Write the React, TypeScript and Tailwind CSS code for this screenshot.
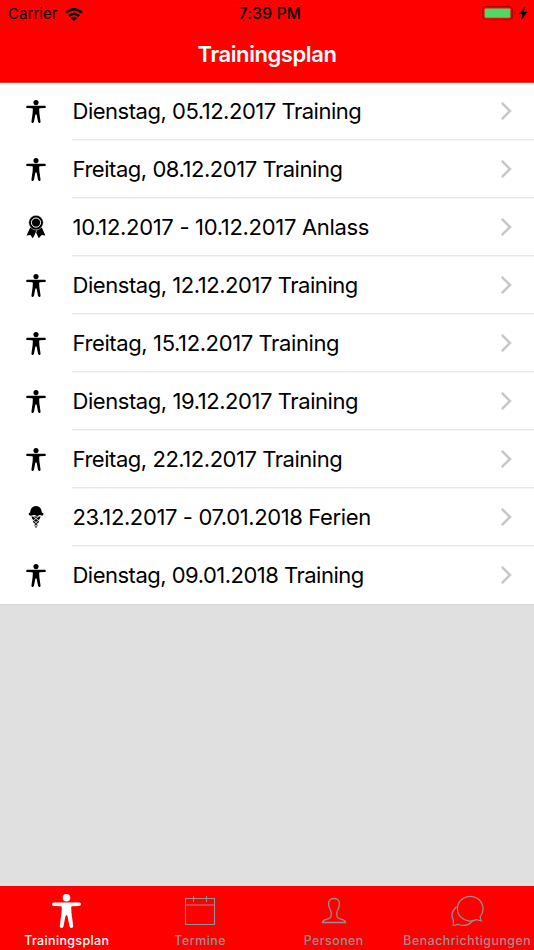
import type { ReactNode } from "react";

type EntryKind = "training" | "event" | "holiday";

interface Entry {
  kind: EntryKind;
  label: string;
  tracking: string;
}

const entries: Entry[] = [
  { kind: "training", label: "Dienstag, 05.12.2017 Training", tracking: "tracking-[-0.48px]" },
  { kind: "training", label: "Freitag, 08.12.2017 Training", tracking: "tracking-[-0.46px]" },
  { kind: "event", label: "10.12.2017 - 10.12.2017 Anlass", tracking: "tracking-[-0.31px]" },
  { kind: "training", label: "Dienstag, 12.12.2017 Training", tracking: "tracking-[-0.45px]" },
  { kind: "training", label: "Freitag, 15.12.2017 Training", tracking: "tracking-[-0.39px]" },
  { kind: "training", label: "Dienstag, 19.12.2017 Training", tracking: "tracking-[-0.43px]" },
  { kind: "training", label: "Freitag, 22.12.2017 Training", tracking: "tracking-[-0.46px]" },
  { kind: "holiday", label: "23.12.2017 - 07.01.2018 Ferien", tracking: "tracking-[-0.38px]" },
  { kind: "training", label: "Dienstag, 09.01.2018 Training", tracking: "tracking-[-0.51px]" },
];

const BodyIcon = ({ className }: { className: string }) => (
  <svg viewBox="0 0 29 34" className={className} fill="currentColor">
    <circle cx="14.5" cy="3.8" r="3.8" />
    <path d="M1.8 8.4H27.2A1.8 1.8 0 0 1 27.2 12L20.4 12.2C19.6 12.2 19.2 12.8 19.2 13.6C19.2 20 20.6 26 21.2 31.8C21.4 34.4 18 34.6 17.5 32.3L15.6 22.5C15.3 20.7 13.7 20.7 13.4 22.5L11.5 32.3C11 34.6 7.6 34.4 7.8 31.8C8.4 26 9.8 20 9.8 13.6C9.8 12.8 9.4 12.2 8.6 12.2L1.8 12A1.8 1.8 0 0 1 1.8 8.4Z" />
  </svg>
);

const RibbonIcon = () => (
  <svg viewBox="0 0 20 24" className="h-6 w-5">
    <path d="M4.2 12.5L0.6 20.4L4.4 20L6.8 23.2L10 17.5L12.8 23.2L15.6 20L19.4 20.4L15.8 12.5Z" fill="#000" />
    <path d="M11 14.5L9.2 19.5" stroke="#fff" strokeWidth="0.6" />
    <circle cx="10" cy="7.6" r="7.3" fill="#000" stroke="#fff" strokeWidth="0.5" />
    <circle cx="10" cy="7.6" r="4.6" fill="none" stroke="#fff" strokeWidth="1" />
  </svg>
);

const IceCreamIcon = () => (
  <svg viewBox="0 0 16 24" className="h-6 w-4">
    <path d="M2.2 7.6C2.2 3.8 4.7 1 8 1S13.8 3.8 13.8 7.6C15.9 7.8 15.9 10.6 14 10.6C12.9 10.6 12.5 9.9 11.8 9.9C10.8 9.9 10.5 10.9 9.2 10.9C8 10.9 7.5 10 6.6 10C5.5 10 4.6 10.7 3 10.7C0.1 10.9 0.1 7.8 2.2 7.6Z" fill="#000" />
    {/* waffle cone with its lattice knocked out */}
    <path d="M3.4 11.6H12.6L8.7 22.4H7.3Z" fill="#000" />
    <path d="M4.6 11L11.4 16M3.6 14L10.4 19.2M5 18.2L9.4 21.8M11.4 11L4.6 16M12.4 14L5.6 19.2M11 18.2L6.6 21.8" fill="none" stroke="#fff" strokeWidth="0.75" />
  </svg>
);

const entryIcons: Record<EntryKind, ReactNode> = {
  training: <BodyIcon className="h-[23px] w-5" />,
  event: <RibbonIcon />,
  holiday: <IceCreamIcon />,
};

const CalendarIcon = () => (
  <svg viewBox="0 0 32 32" className="h-8 w-8" fill="none" stroke="currentColor" strokeWidth="1.1">
    <path d="M1.5 3.5H30.5V29.5H1.5ZM1.5 10H30.5M9.5 1V7M22.5 1V7" />
  </svg>
);

const PersonIcon = () => (
  <svg viewBox="0 0 32 32" className="h-8 w-8" fill="none" stroke="currentColor" strokeWidth="1.3">
    <path d="M16 3.5C12 3.5 10.4 6 10.6 9.4C10.8 13.5 12.8 15 13.2 17.4C13.7 23 12 23.6 8.5 24.4C5.8 25 4.5 25.6 4.5 27.5H27.5C27.5 25.6 26.2 25 23.5 24.4C20 23.6 18.3 23 18.8 17.4C19.2 15 21.2 13.5 21.4 9.4C21.6 6 20 3.5 16 3.5Z" />
  </svg>
);

const ChatIcon = () => (
  <svg viewBox="0 0 34 34" className="mr-px h-[34px] w-[34px]" fill="none" stroke="currentColor" strokeWidth="1.2">
    <path d="M31.5 27C30.5 25.5 30 24.5 30.3 22.3A12.8 12.3 0 1 0 26.2 25.6C28 25.6 29.5 26.7 31.5 27Z" />
    <path d="M6.6 12.7C1.7 17 1.2 22 3.3 26C3.8 27.8 3 29.5 3.3 31.5C5 31.5 6.5 30.1 8.6 30.5C13.5 32.3 19 31 22.4 27" />
  </svg>
);

const tabs = [
  { label: "Trainingsplan", icon: <BodyIcon className="h-[34px] w-[29px]" />, style: "text-white tracking-[0.35px]" },
  { label: "Termine", icon: <CalendarIcon />, style: "text-[#929292] tracking-[0.45px]" },
  { label: "Personen", icon: <PersonIcon />, style: "text-[#929292] tracking-[0.4px]" },
  { label: "Benachrichtigungen", icon: <ChatIcon />, style: "text-[#929292] tracking-[0.4px]" },
];

const StatusBar = () => (
  <div className="flex h-7 items-center justify-between pl-2 pr-1.5 text-[15.5px] text-black">
    <div className="flex flex-1 items-center gap-[7px]">
      <span className="pt-px text-[15px] tracking-[0.05px]">Carrier</span>
      <svg viewBox="0 0 18 13" className="h-[13px] w-[18px]" fill="none" stroke="currentColor" strokeWidth="2.5">
        <path d="M1 4.6Q9-2.2 17 4.6M3.9 8Q9 3.4 14.1 8" />
        <path d="M5.8 10Q9 7.6 12.2 10L9 13Z" fill="currentColor" stroke="none" />
      </svg>
    </div>
    <span className="pl-1 text-[15.5px] font-medium tracking-[0.25px]">7:39 PM</span>
    <div className="flex flex-1 items-center justify-end">
      <svg viewBox="0 0 46 16" className="h-4 w-[46px]">
        <rect x="0.8" y="0.6" width="29.4" height="13" rx="2.8" fill="none" stroke="#a60000" strokeWidth="1.2" />
        <rect x="2.6" y="2.4" width="25.8" height="9.4" rx="1" fill="#4cd964" />
        <path d="M32 5Q33.8 7.1 32 9.2Z" fill="#a60000" />
        <path d="M42.9 0.9L37.4 8.1H40.6L39.4 13.7L45.2 6.1H41.9Z" fill="#000" stroke="#000" strokeWidth="0.3" />
      </svg>
    </div>
  </div>
);

const EntryRow = ({ entry, last }: { entry: Entry; last: boolean }) => (
  <li className="flex h-[58px] items-stretch">
    <div className="flex w-[72px] items-center justify-center">{entryIcons[entry.kind]}</div>
    <div
      className={`flex flex-1 items-center justify-between border-b pl-[0.5px] pr-[22px] ${
        last ? "border-white" : "border-[#e9e9ea] shadow-[0_1px_0_#f6f6f6]"
      }`}
    >
      <span className={`text-[22px] leading-7 text-black ${entry.tracking}`}>{entry.label}</span>
      <svg viewBox="0 0 12 20" className="h-5 w-3" fill="none" stroke="#c7c7cc" strokeWidth="2.5">
        <path d="M1.8 1.8L10 10L1.8 18.2" />
      </svg>
    </div>
  </li>
);

export default function App() {
  return (
    <div className="flex h-[950px] w-[534px] flex-col overflow-hidden bg-[#e0e0e0] font-['Inter','Liberation_Sans',sans-serif]">
      <header className="relative z-10 h-[83px] shrink-0 border-b border-[#ff3030] bg-[#ff0000]">
        <StatusBar />
        <h1 className="flex h-[53px] items-center justify-center text-[22px] font-semibold tracking-[-0.42px] text-white">
          Trainingsplan
        </h1>
      </header>
      <main className="-mt-px flex-1">
        <ul className="border-b border-[#d9d9d9] bg-white">
          {entries.map((entry, i) => (
            <EntryRow key={entry.label} entry={entry} last={i === entries.length - 1} />
          ))}
        </ul>
      </main>
      <nav className="grid h-16 shrink-0 grid-cols-4 bg-[#ff0000]">
        {tabs.map((tab) => (
          <div key={tab.label} className={`flex flex-col items-center text-[12.5px] font-medium ${tab.style}`}>
            <div className="flex h-[46px] items-center justify-center pt-1">{tab.icon}</div>
            <span className="whitespace-nowrap pt-px leading-4">{tab.label}</span>
          </div>
        ))}
      </nav>
    </div>
  );
}
